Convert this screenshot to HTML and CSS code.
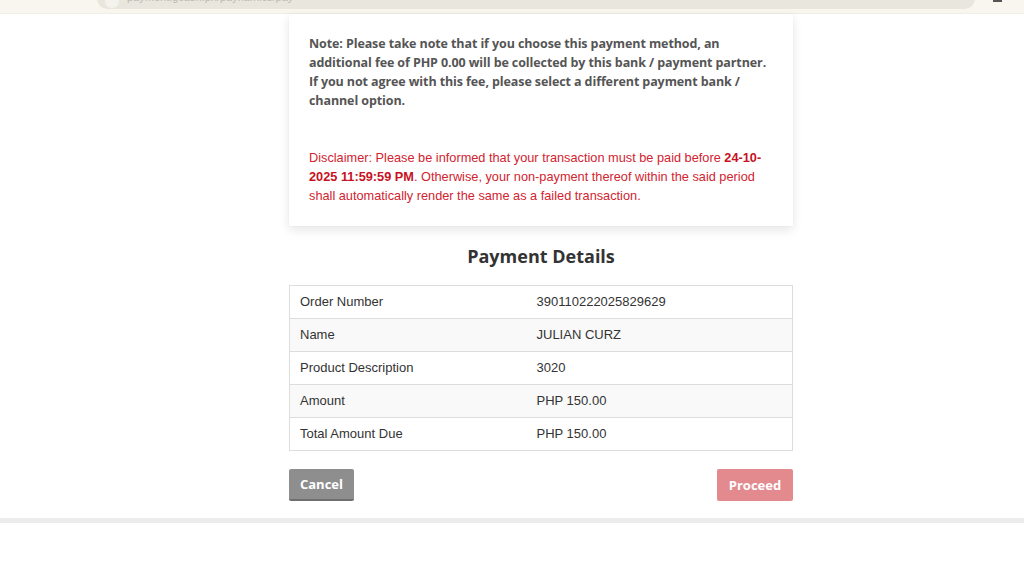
FILE: index.html
```html
<!DOCTYPE html>
<html>
<head>
<meta charset="utf-8">
<link rel="stylesheet" href="styles.css">
</head>
<body>
<div class="chrome">
  <div class="urlbar"><span class="dot"></span><span class="urltext">payment.gcash.ph/paynamics/pay</span></div>
  <div class="menu"></div>
</div>
<div class="page">
  <div class="wrap">
    <div class="card">
      <p class="note">Note: Please take note that if you choose this payment method, an additional fee of PHP 0.00 will be collected by this bank / payment partner. If you not agree with this fee, please select a different payment bank / channel option.</p>
      <p class="disclaimer">Disclaimer: Please be informed that your transaction must be paid before <b>24-10-2025 11:59:59 PM</b>. Otherwise, your non-payment thereof within the said period shall automatically render the same as a failed transaction.</p>
    </div>
    <h2 class="title">Payment Details</h2>
    <table class="details">
      <tr><td class="label">Order Number</td><td>390110222025829629</td></tr>
      <tr class="alt"><td class="label">Name</td><td>JULIAN CURZ</td></tr>
      <tr><td class="label">Product Description</td><td>3020</td></tr>
      <tr class="alt"><td class="label">Amount</td><td>PHP 150.00</td></tr>
      <tr><td class="label">Total Amount Due</td><td>PHP 150.00</td></tr>
    </table>
    <div class="actions">
      <button class="btn cancel">Cancel</button>
      <button class="btn proceed">Proceed</button>
    </div>
  </div>
</div>
<div class="footer-line"></div>
</body>
</html>
```

FILE: styles.css
```css
html, body {
  margin: 0;
  padding: 0;
  background: #ffffff;
}
body {
  font-family: "Liberation Sans", Arial, sans-serif;
  overflow: hidden;
  height: 576px;
}
.chrome {
  height: 13px;
  background: #f8f6ee;
  border-bottom: 1px solid #f1eee4;
  display: flex;
  align-items: flex-start;
  overflow: hidden;
}
.urlbar {
  margin-left: 97px;
  margin-top: -12px;
  width: 878px;
  height: 21px;
  border-radius: 11px;
  background: #e9e6de;
  display: flex;
  align-items: flex-end;
  padding-left: 8px;
  box-sizing: border-box;
}
.dot {
  width: 14px;
  height: 14px;
  border-radius: 50%;
  background: #f4f2ec;
  margin-bottom: 1px;
  flex: none;
}
.urltext {
  font-size: 11px;
  color: #bdb9b0;
  line-height: 11px;
  margin-left: 8px;
  margin-bottom: 6px;
}
.menu {
  width: 9px;
  height: 2px;
  background: #555;
  margin-left: 18px;
}
.page {
  padding-left: 289px;
}
.wrap {
  width: 504px;
}
.card {
  background: #fff;
  box-shadow: 0 4px 10px rgba(0, 0, 0, 0.10), 0 0 2px rgba(0, 0, 0, 0.04);
  padding: 20px 20px 21px 20px;
}
.note {
  margin: 0;
  font-family: "Open Sans", sans-serif;
  font-weight: 700;
  font-size: 12.5px;
  line-height: 19px;
  color: #555;
  letter-spacing: -0.1px;
}
.disclaimer {
  margin: 38px 0 0 0;
  font-size: 12.75px;
  line-height: 19px;
  color: #d2232f;
}
.disclaimer b {
  font-weight: 700;
  color: #c8101e;
}
.title {
  margin: 17px 0 0 0;
  text-align: center;
  font-family: "Open Sans", sans-serif;
  font-weight: 700;
  font-size: 18px;
  line-height: 26px;
  color: #333;
}
.details {
  margin-top: 16px;
  width: 504px;
  border-collapse: collapse;
  font-size: 13px;
  color: #333;
}
.details td {
  border: 1px solid #dddddd;
  height: 33px;
  padding: 0 10px 2px 10px;
  box-sizing: border-box;
}
.details td.label {
  width: 237px;
  border-right: none;
}
.details td + td {
  border-left: none;
}
.details tr.alt td {
  background: #f9f9f9;
}
.actions {
  display: flex;
  justify-content: space-between;
  margin-top: 18px;
}
.btn {
  font-family: "Open Sans", sans-serif;
  font-weight: 700;
  font-size: 13px;
  color: #fff;
  border: none;
  border-radius: 2px;
  height: 32px;
  padding: 0 10px;
  cursor: pointer;
}
.cancel {
  background: #8e8e8e;
  border-bottom: 2px solid #6f6f6f;
  width: 65px;
}
.proceed {
  background: #e28a8e;
  width: 76px;
}
.footer-line {
  margin-top: 17px;
  height: 5px;
  background: #ececec;
}
```
